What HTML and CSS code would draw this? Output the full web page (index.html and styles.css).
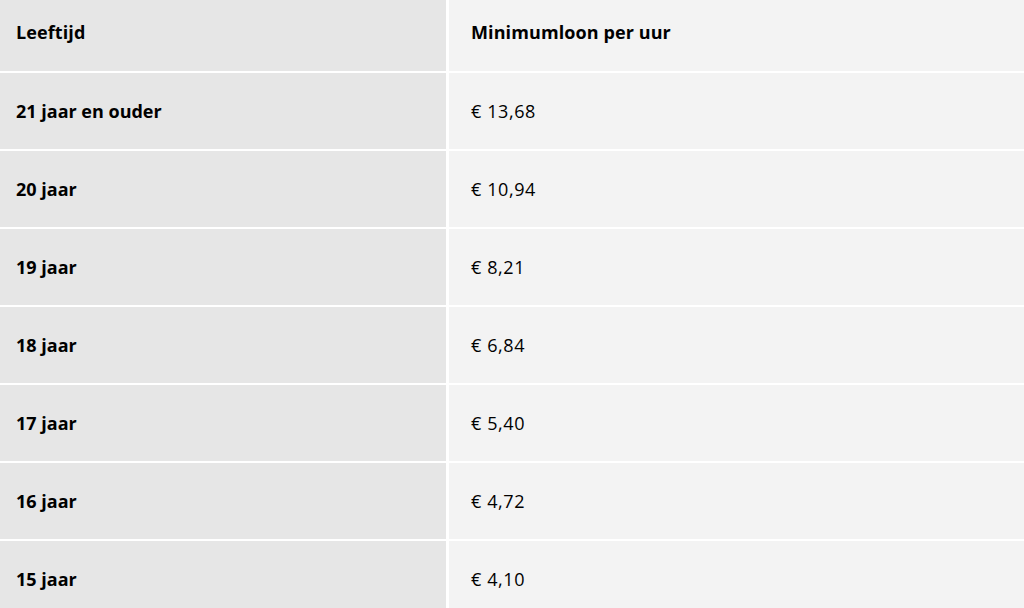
FILE: index.html
```html
<!DOCTYPE html>
<html lang="nl">
<head>
<meta charset="utf-8">
<link rel="stylesheet" href="styles.css">
</head>
<body>
<div class="table">
  <div class="cell head age">Leeftijd</div>
  <div class="cell head wage">Minimumloon per uur</div>
  <div class="cell age">21 jaar en ouder</div>
  <div class="cell wage">€ 13,68</div>
  <div class="cell age">20 jaar</div>
  <div class="cell wage">€ 10,94</div>
  <div class="cell age">19 jaar</div>
  <div class="cell wage">€ 8,21</div>
  <div class="cell age">18 jaar</div>
  <div class="cell wage">€ 6,84</div>
  <div class="cell age">17 jaar</div>
  <div class="cell wage">€ 5,40</div>
  <div class="cell age">16 jaar</div>
  <div class="cell wage">€ 4,72</div>
  <div class="cell age">15 jaar</div>
  <div class="cell wage">€ 4,10</div>
</div>
</body>
</html>
```
FILE: styles.css
```css
html, body {
  margin: 0;
  padding: 0;
  background: #ffffff;
}
body {
  font-family: "Open Sans", "Noto Sans", sans-serif;
  font-size: 18px;
  color: #000000;
  overflow: hidden;
}
.table {
  display: grid;
  grid-template-columns: 446px 1fr;
  grid-template-rows: 71px repeat(7, 76px);
  column-gap: 3px;
  row-gap: 2px;
}
.cell {
  display: flex;
  align-items: center;
}
.age {
  background: #e6e6e6;
  padding-left: 16px;
  font-weight: 700;
}
.wage {
  background: #f3f3f3;
  padding-left: 22px;
  letter-spacing: 0.6px;
}
.head {
  font-weight: 700;
  padding-bottom: 8px;
  letter-spacing: 0.1px;
}
```
